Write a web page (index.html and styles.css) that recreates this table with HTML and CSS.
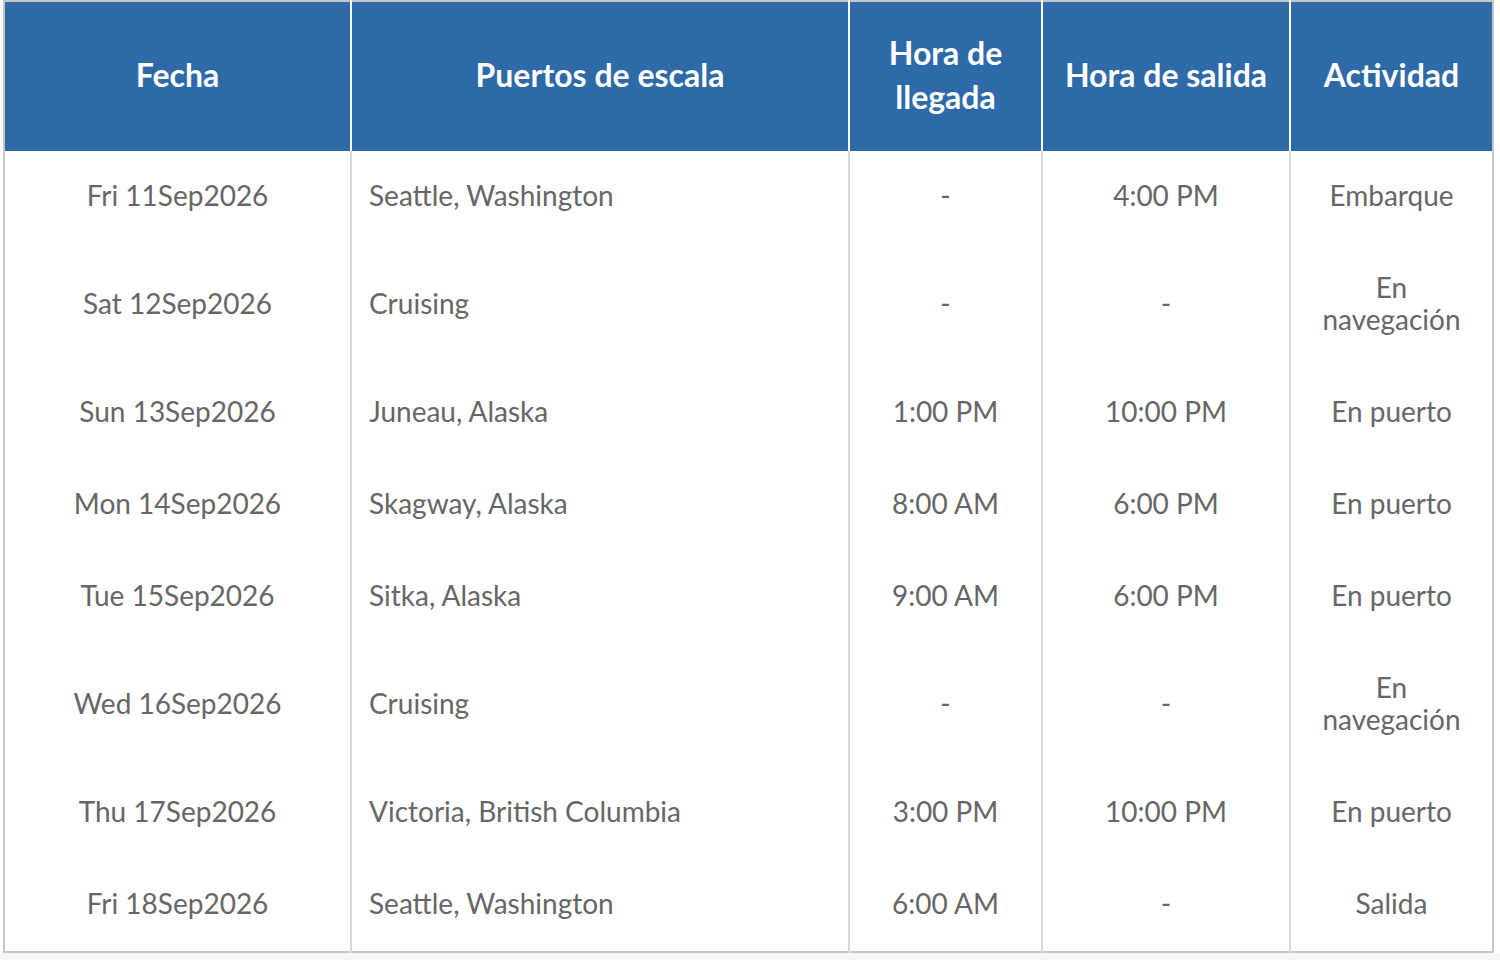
FILE: index.html
```html
<!DOCTYPE html>
<html lang="es">
<head>
<meta charset="utf-8">
<title>Itinerario</title>
<link rel="stylesheet" href="styles.css">
</head>
<body>
<div class="page">
  <table class="itinerary">
    <colgroup>
      <col class="c-date">
      <col class="c-port">
      <col class="c-arr">
      <col class="c-dep">
      <col class="c-act">
    </colgroup>
    <thead>
      <tr>
        <th>Fecha</th>
        <th>Puertos de escala</th>
        <th>Hora de<br>llegada</th>
        <th>Hora de salida</th>
        <th>Actividad</th>
      </tr>
    </thead>
    <tbody>
      <tr><td>Fri 11Sep2026</td><td class="port">Seattle, Washington</td><td>-</td><td>4:00 PM</td><td>Embarque</td></tr>
      <tr><td>Sat 12Sep2026</td><td class="port">Cruising</td><td>-</td><td>-</td><td>En<br>navegacio&#769;n</td></tr>
      <tr><td>Sun 13Sep2026</td><td class="port">Juneau, Alaska</td><td>1:00 PM</td><td>10:00 PM</td><td>En puerto</td></tr>
      <tr><td>Mon 14Sep2026</td><td class="port">Skagway, Alaska</td><td>8:00 AM</td><td>6:00 PM</td><td>En puerto</td></tr>
      <tr><td>Tue 15Sep2026</td><td class="port">Sitka, Alaska</td><td>9:00 AM</td><td>6:00 PM</td><td>En puerto</td></tr>
      <tr><td>Wed 16Sep2026</td><td class="port">Cruising</td><td>-</td><td>-</td><td>En<br>navegacio&#769;n</td></tr>
      <tr><td>Thu 17Sep2026</td><td class="port">Victoria, British Columbia</td><td>3:00 PM</td><td>10:00 PM</td><td>En puerto</td></tr>
      <tr><td>Fri 18Sep2026</td><td class="port">Seattle, Washington</td><td>6:00 AM</td><td>-</td><td>Salida</td></tr>
    </tbody>
  </table>
</div>
</body>
</html>
```

FILE: styles.css
```css
html, body {
  margin: 0;
  padding: 0;
}
body {
  background: #f6f6f6;
  font-family: Lato, "Open Sans", "Liberation Sans", sans-serif;
}
.page {
  background: #ffffff;
  width: 1500px;
  padding-left: 3px;
  box-sizing: border-box;
}
.itinerary {
  border-collapse: collapse;
  width: 1489px;
  table-layout: fixed;
  border: 2px solid #c6c6c6;
}
.c-date { width: 347px; }
.c-port { width: 498px; }
.c-arr { width: 193px; }
.c-dep { width: 248px; }
.c-act { width: 203px; }

.itinerary th {
  background: #2f6aa8;
  color: #ffffff;
  font-weight: 700;
  font-size: 32px;
  line-height: 44px;
  padding: 29px 6px 32px;
  text-align: center;
  vertical-align: middle;
}
.itinerary th + th {
  border-left: 2px solid #ffffff;
}
.itinerary td {
  color: #666666;
  font-size: 28px;
  line-height: 32px;
  padding: 28px 8px 32px;
  text-align: center;
  vertical-align: middle;
}
.itinerary td + td {
  border-left: 2px solid #d9d9d9;
}
.itinerary td.port {
  text-align: left;
  padding-left: 17px;
}
```
